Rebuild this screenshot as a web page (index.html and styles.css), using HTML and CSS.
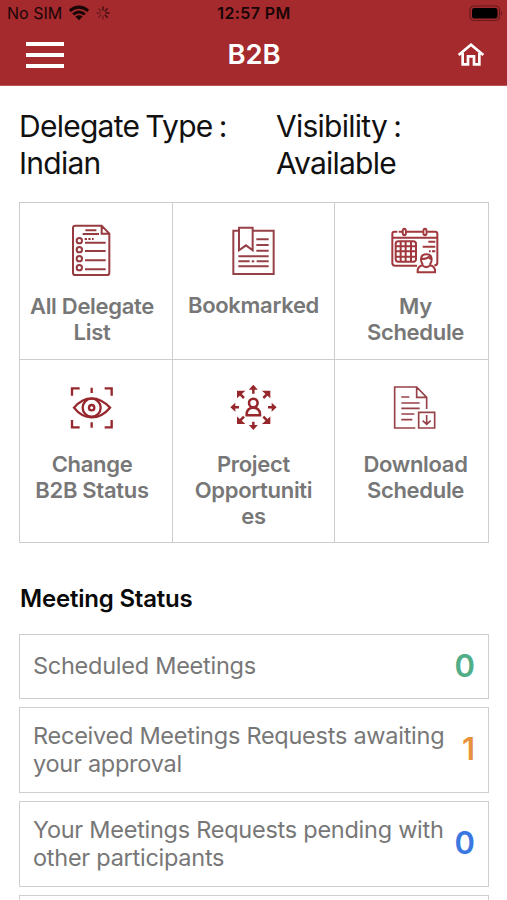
FILE: index.html
```html
<!DOCTYPE html>
<html lang="en">
<head>
<meta charset="utf-8">
<title>B2B</title>
<link rel="stylesheet" href="styles.css">
</head>
<body>
<header class="header">
  <div class="status">
    <div class="status-left">
      <span class="sim">No SIM</span>
      <svg class="wifi" width="22" height="16" viewBox="0 0 22 16" fill="none" stroke="#180506" stroke-width="3"><path d="M1.8 5.8Q11-1.600 20.200 5.800M5.200 9.400Q11 4.700 16.800 9.400"/><path fill="#180506" stroke="none" d="M7.300 11.600Q11 8.800 14.700 11.600L11 15.300Z"/></svg>
      <svg class="spinner" width="14" height="14" viewBox="0 0 14 14" fill="none" stroke="#3c0d0f" stroke-width="1.400" stroke-linecap="round"><path d="M7 1v3M11.200 2.800L9.100 4.900M13 7h-3M11.200 11.200L9.100 9.100"/><path opacity=".5" d="M7 13v-3M2.800 11.200l2.100-2.100M1 7h3M2.800 2.800l2.100 2.100"/></svg>
    </div>
    <span class="clock">12:57 PM</span>
    <svg class="battery" width="34" height="17" viewBox="0 0 34 17"><rect x="1" y="1" width="29.500" height="14.500" rx="4" fill="none" stroke="#681b1d" stroke-width="1.200"/><rect x="3" y="3" width="25.500" height="10.500" rx="2.200" fill="#000"/><path d="M32 6q2 2.200 0 4.400z" fill="#54171a"/></svg>
  </div>
  <div class="nav">
    <div class="menu"><i></i><i></i><i></i></div>
    <h1>B2B</h1>
    <svg class="home" width="28" height="26" viewBox="0 0 84 78" fill="none" stroke="#fff" stroke-width="8"><path d="M5 39L42 8l37 31M17 33v34h16V43h18v24h16V33"/></svg>
  </div>
</header>
<main>
  <section class="info">
    <p class="type">Delegate Type :<br>Indian</p>
    <p class="visibility">Visibility :<br>Available</p>
  </section>
  <section class="grid">
    <div class="tile first">
      <svg class="icon" width="54" height="54" viewBox="16 24 162 162" fill="none" stroke="#963b40" stroke-width="6"><path d="M53 32H126L149 56V173q0 7-7 7H47q-7 0-7-7V39q0-7 7-7zM126 33v23h22M77 46h33M69 57h49M76 83h62M76 108h62M76 136h62M76 163h62"/><path stroke-dasharray="7 4" d="M75 72h27"/><g fill="#fff"><circle cx="59" cy="77" r="8"/><circle cx="59" cy="104" r="8"/><circle cx="59" cy="131" r="8"/><circle cx="59" cy="158" r="8"/></g></svg>
      <span>All Delegate<br>List</span>
    </div>
    <div class="tile">
      <svg class="icon" width="54" height="54" viewBox="20 24 162 162" fill="none" stroke="#964047" stroke-width="6"><path d="M56 47H39V177H160V47H97M56 38H97V106L77 91 56 106ZM108 73h37M108 90h37M108 107h37M54 124h91M54 139h34M109 139h36M54 154h91"/><path d="M94 139h8"/></svg>
      <span class="up">Bookmarked</span>
    </div>
    <div class="tile last">
      <svg class="icon" width="54" height="54" viewBox="27 24 162 162" fill="none" stroke="#a0383d" stroke-width="6"><path d="M52 50H43q-6 0-6 6v88q0 8 8 8h66M56 50h10M80 50h48M142 50h24q6 0 6 6v87q0 8-9 8M38 68h133M145 80h21M128 95h38M147 109h5M156 109h10"/><g fill="#fff"><ellipse cx="73" cy="51" rx="5" ry="10"/><ellipse cx="135" cy="51" rx="5" ry="10"/></g><rect x="47" y="79" width="61" height="61" rx="8"/><path d="M62 80v59M77 80v59M93 80v59M48 94h59M48 109h59M48 125h59"/><path fill="#fff" d="M113 172v-7q2-11 14-14v-5q-4-6-4-12 0-16 16-16t16 16q0 6-4 12v5q12 3 14 14v7zM127 151q12 11 24 0M124 132q16 0 22-6 2 5 8 7"/></svg>
      <span>My<br>Schedule</span>
    </div>
    <div class="tile first lower">
      <svg class="icon" width="54" height="54" viewBox="14 19 162 162" fill="none" stroke="#96272c" stroke-width="7"><path d="M35 63V41h23M133 41h21v22M35 136v22h23M133 158h21v-22M94 39v16M94 143v16M41 99q24-28 53-28t55 28q-24 29-55 29T41 99z"/><circle cx="94" cy="99" r="27"/><circle cx="94" cy="99" r="8"/></svg>
      <span>Change<br>B2B Status</span>
    </div>
    <div class="tile lower">
      <svg class="icon" width="54" height="54" viewBox="20 19 162 162" fill="none" stroke="#96272c" stroke-width="7.500"><circle cx="99" cy="85" r="13"/><path d="M79 122v-5q2-18 20-18t20 18v5z"/><path d="M99 57V37M99 141v20M56 98H37M143 98h19M71 70L55 54M129 70l16-16M71 126l-16 16M129 126l16 16"/><path fill="#96272c" stroke-width="4" d="M90 43l9-10 9 10zM90 153l9 10 9-10zM43 89l-10 9 10 9zM156 89l10 9-10 9zM52 66V50h18zM148 66V50h-18zM52 130v16h18zM148 130v16h-18z"/></svg>
      <span>Project<br>Opportuniti<br>es</span>
    </div>
    <div class="tile last lower">
      <svg class="icon" width="54" height="54" viewBox="28 19 162 162" fill="none" stroke="#964249" stroke-width="5"><path d="M107 160H45V37h66l30 31v35M111 37v31h30M65 67h24M65 85h55M65 101h55M65 118h39M65 135h33M117 113h48v47h-48zM141 121v27M129 138l12 11 12-11"/></svg>
      <span>Download<br>Schedule</span>
    </div>
  </section>
  <h2>Meeting Status</h2>
  <section class="list">
    <div class="card short"><p>Scheduled Meetings</p><b class="green">0</b></div>
    <div class="card"><p>Received Meetings Requests awaiting<br>your approval</p><b class="orange">1</b></div>
    <div class="card"><p>Your Meetings Requests pending with<br>other participants</p><b class="blue">0</b></div>
    <div class="card cut"></div>
  </section>
</main>
</body>
</html>
```
FILE: styles.css
```css
* { box-sizing: border-box; }
body { margin: 0; height: 900px; overflow: hidden; background: #fff; color: #111; font-family: Inter, "Liberation Sans", sans-serif; }
h1, h2, p { margin: 0; }
svg { display: block; flex: none; }
.header { height: 86px; background: #a52a2d; border-bottom: 1px solid #b9585a; }
.status { height: 26px; display: grid; grid-template-columns: 1fr auto 1fr; align-items: center; padding: 0 4px 0 7px; color: #180506; }
.status-left { display: flex; align-items: center; }
.sim { font-size: 16px; letter-spacing: 0; width: 61px; white-space: nowrap; }
.spinner { margin-left: 6px; }
.clock { font-size: 16px; font-weight: 600; letter-spacing: .4px; margin-right: 2px; }
.battery { justify-self: end; }
.nav { height: 59px; display: grid; grid-template-columns: 1fr auto 1fr; align-items: center; padding: 0 22px 2px 26px; }
.menu { width: 38px; display: grid; gap: 7px; }
.menu i { height: 4px; background: #fff; }
h1 { color: #fff; font-size: 27.500px; line-height: 36px; font-weight: 600; letter-spacing: -.2px; margin: 0 3px 1px 0; }
.home { justify-self: end; }
main { padding: 22px 18px 0 19px; }
.info { display: grid; grid-template-columns: 257px 1fr; height: 94px; font-size: 30px; line-height: 37px; letter-spacing: -.75px; word-spacing: -1.500px; white-space: nowrap; }
.grid { display: grid; grid-template-columns: 153px 162px 154px; grid-template-rows: 157px 183px; width: 470px; border: 1px solid #cdcdcd; border-width: 1px 0 0 1px; height: 341px; }
.tile { display: flex; flex-direction: column; align-items: center; padding-top: 20px; border: 1px solid #cdcdcd; border-width: 0 1px 1px 0; color: #777; text-align: center; font-size: 22px; font-weight: 600; line-height: 26px; letter-spacing: -.3px; }
.tile span { margin-top: 16px; white-space: nowrap; }
.tile .up { margin-top: 15px; }
.first { padding-right: 8px; }
.last { padding-left: 8px; }
.tile.lower { padding-top: 21px; }
.tile.lower span { margin-top: 16px; }
h2 { margin: 40px 0 19px 1px; height: 32px; line-height: 32px; font-size: 24px; font-weight: 600; letter-spacing: -.2px; color: #090909; }
.list { display: grid; gap: 8px; width: 470px; }
.card { height: 86px; border: 1px solid #cfcfcf; padding: 0 13px; display: flex; justify-content: space-between; align-items: center; white-space: nowrap; }
.short { height: 65px; }
.cut { height: 5px; border-bottom: 0; }
.card p { font-size: 23.500px; line-height: 28.500px; letter-spacing: -.26px; color: #777; }
.card b { font-size: 31px; line-height: 36px; font-weight: 600; margin-bottom: 2px; }
.green { color: #50ad87; }
.orange { color: #e9923c; }
.blue { color: #3978e0; }
```
